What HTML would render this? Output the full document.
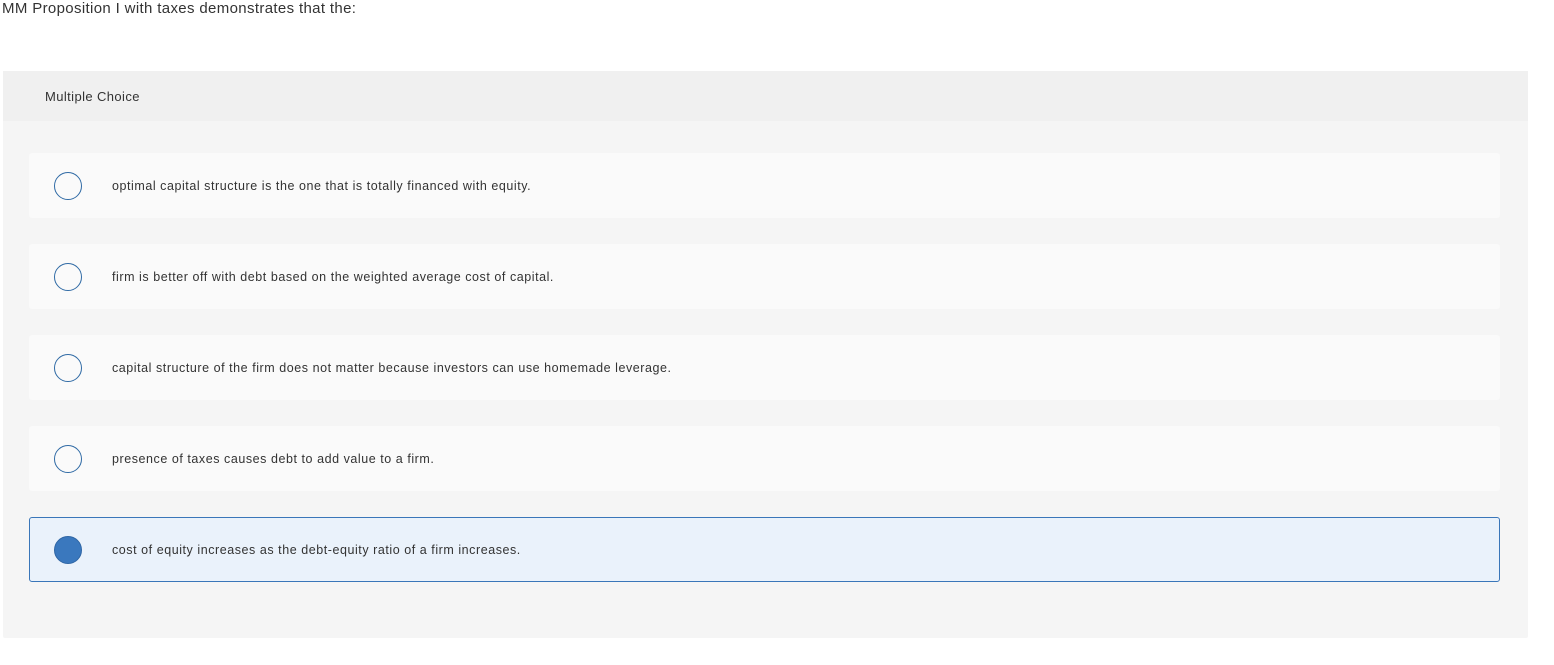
<!DOCTYPE html>
<html><head><style>
body{margin:0;background:#fff;font-family:"Liberation Sans",sans-serif;color:#333;width:1554px;height:665px;position:relative;overflow:hidden}
.t{position:absolute;left:2px;top:0;font-size:15px;line-height:17px;letter-spacing:0.35px}
.p{position:absolute;left:3px;top:71px;width:1525px;height:567px;background:#f5f5f5;border-radius:2px}
.h{position:absolute;left:0;top:0;width:1525px;height:50px;background:#f0f0f0}
.h span{position:absolute;left:42px;top:18px;font-size:13px;line-height:16px;letter-spacing:0.4px}
.o{position:absolute;left:26px;width:1471px;height:65px;background:#fafafa;border-radius:3px;box-sizing:border-box}
.o i{position:absolute;left:25px;top:19px;width:28px;height:28px;border:1.5px solid #2f6aa5;border-radius:50%;box-sizing:border-box}
.o span{position:absolute;left:83px;top:26px;font-size:12.5px;line-height:15px;letter-spacing:0.55px}
.s{background:#eaf2fb;border:1px solid #3a76b9}
.s i{background:#3a78be;border-color:#2f66a5;left:24px;top:18px}
.s span{left:82px;top:25px}
</style></head><body>
<div class="t">MM Proposition I with taxes demonstrates that the:</div>
<div class="p">
<div class="h"><span>Multiple Choice</span></div>
<div class="o" style="top:82px"><i></i><span>optimal capital structure is the one that is totally financed with equity.</span></div>
<div class="o" style="top:173px"><i></i><span>firm is better off with debt based on the weighted average cost of capital.</span></div>
<div class="o" style="top:264px"><i></i><span>capital structure of the firm does not matter because investors can use homemade leverage.</span></div>
<div class="o" style="top:355px"><i></i><span>presence of taxes causes debt to add value to a firm.</span></div>
<div class="o s" style="top:446px"><i></i><span>cost of equity increases as the debt-equity ratio of a firm increases.</span></div>
</div>
</body></html>
